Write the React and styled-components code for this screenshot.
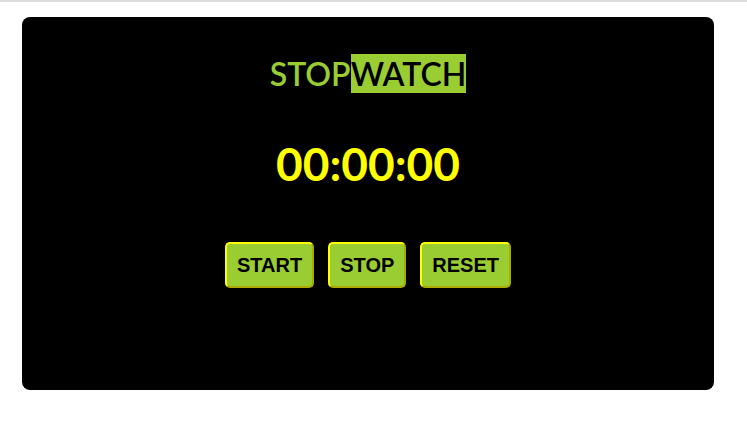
import React, { useState, useEffect, useRef } from 'react'
import styled, { createGlobalStyle } from 'styled-components'

const GlobalStyle = createGlobalStyle`
  body {
    margin: 0;
    background: #fff;
    border-top: 2px solid #dcdcdc;
  }
`

const Page = styled.div`
  padding: 15px 0 0 22px;
`

const Card = styled.div`
  width: 692px;
  height: 373px;
  box-sizing: border-box;
  background: #000;
  border-radius: 8px;
  display: flex;
  flex-direction: column;
  align-items: center;
  padding-top: 37px;
`

const Title = styled.h1`
  margin: 0;
  font-family: Lato, 'Liberation Sans', sans-serif;
  font-weight: 600;
  font-size: 32px;
  line-height: 39px;
  color: yellowgreen;
`

const Highlight = styled.span`
  background: yellowgreen;
  color: #000;
`

const Timer = styled.div`
  margin-top: 43px;
  font-family: Lato, 'Liberation Sans', sans-serif;
  font-weight: 700;
  font-size: 46px;
  line-height: 56px;
  color: #ffff00;
`

const Controls = styled.div`
  display: flex;
  gap: 14px;
  margin-top: 50px;
`

const Button = styled.button`
  font-family: 'Liberation Sans', Arial, sans-serif;
  font-weight: 700;
  font-size: 20px;
  line-height: 22px;
  color: #000;
  background: yellowgreen;
  border: 2px outset #ffff00;
  border-radius: 5px;
  padding: 10px 10px;
  cursor: pointer;
`

const pad = (n) => String(n).padStart(2, '0')

const App = () => {
  const [time, setTime] = useState(0)
  const [running, setRunning] = useState(false)
  const timer = useRef(null)

  useEffect(() => {
    if (running) {
      timer.current = setInterval(() => setTime((t) => t + 1), 10)
    }
    return () => clearInterval(timer.current)
  }, [running])

  const minutes = Math.floor(time / 6000)
  const seconds = Math.floor(time / 100) % 60
  const hundredths = time % 100

  return (
    <>
      <GlobalStyle />
      <Page>
        <Card>
          <Title>
            STOP<Highlight>WATCH</Highlight>
          </Title>
          <Timer>{`${pad(minutes)}:${pad(seconds)}:${pad(hundredths)}`}</Timer>
          <Controls>
            <Button onClick={() => setRunning(true)}>START</Button>
            <Button onClick={() => setRunning(false)}>STOP</Button>
            <Button
              onClick={() => {
                setRunning(false)
                setTime(0)
              }}
            >
              RESET
            </Button>
          </Controls>
        </Card>
      </Page>
    </>
  )
}

export default App
